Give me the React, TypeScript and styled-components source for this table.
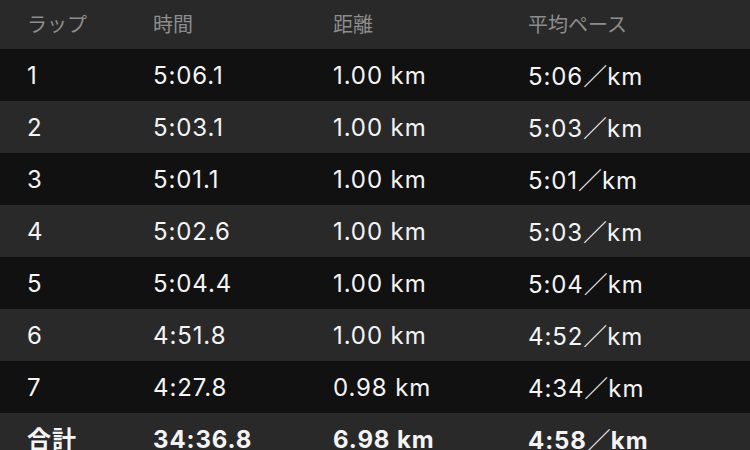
import React from 'react';
import styled, { createGlobalStyle } from 'styled-components';

interface Lap {
	lap: string;
	time: string;
	distance: string;
	pace: string;
}

const laps: Lap[] = [
	{ lap: '1', time: '5:06.1', distance: '1.00 km', pace: '5:06' },
	{ lap: '2', time: '5:03.1', distance: '1.00 km', pace: '5:03' },
	{ lap: '3', time: '5:01.1', distance: '1.00 km', pace: '5:01' },
	{ lap: '4', time: '5:02.6', distance: '1.00 km', pace: '5:03' },
	{ lap: '5', time: '5:04.4', distance: '1.00 km', pace: '5:04' },
	{ lap: '6', time: '4:51.8', distance: '1.00 km', pace: '4:52' },
	{ lap: '7', time: '4:27.8', distance: '0.98 km', pace: '4:34' },
];

const total: Lap = { lap: '合計', time: '34:36.8', distance: '6.98 km', pace: '4:58' };

const GlobalStyle = createGlobalStyle`
	html, body {
		margin: 0;
		padding: 0;
		background: #121212;
		overflow: hidden;
	}
	body {
		font-family: Inter, "Noto Sans CJK JP", sans-serif;
		-webkit-font-smoothing: antialiased;
	}
`;

const Table = styled.div`
	width: 750px;
	height: 450px;
	overflow: hidden;
	display: flex;
	flex-direction: column;
`;

const Row = styled.div<{ $variant: 'header' | 'dark' | 'light' | 'total' }>`
	display: grid;
	grid-template-columns: 126px 180px 195px 1fr;
	align-items: center;
	flex: 0 0 auto;
	height: ${(p) => (p.$variant === 'header' ? '49px' : '52px')};
	padding-left: 27px;
	box-sizing: border-box;
	background: ${(p) => (p.$variant === 'dark' ? '#111111' : '#292929')};
	color: ${(p) => (p.$variant === 'header' ? '#8d8d8d' : '#f4f4f4')};
	font-size: ${(p) => (p.$variant === 'header' ? '20px' : '24px')};
	font-weight: ${(p) => (p.$variant === 'total' ? 700 : 400)};
	letter-spacing: ${(p) => (p.$variant === 'header' ? '0' : '0.9px')};
`;

const Cell = styled.span`
	white-space: nowrap;
	line-height: 1;
	padding-top: 1px;
`;

const Slash = styled.span`
	font-family: "Noto Sans CJK JP", sans-serif;
	font-weight: 300;
	letter-spacing: 0;
`;

const PaceCell: React.FC<{ pace: string }> = ({ pace }) => (
	<Cell>
		{pace}
		<Slash>／</Slash>km
	</Cell>
);

const App: React.FC = () => (
	<>
		<GlobalStyle />
		<Table>
			<Row $variant="header">
				<Cell>ラップ</Cell>
				<Cell>時間</Cell>
				<Cell>距離</Cell>
				<Cell>平均ペース</Cell>
			</Row>
			{laps.map((l, i) => (
				<Row key={l.lap} $variant={i % 2 === 0 ? 'dark' : 'light'}>
					<Cell>{l.lap}</Cell>
					<Cell>{l.time}</Cell>
					<Cell>{l.distance}</Cell>
					<PaceCell pace={l.pace} />
				</Row>
			))}
			<Row $variant="total">
				<Cell>{total.lap}</Cell>
				<Cell>{total.time}</Cell>
				<Cell>{total.distance}</Cell>
				<PaceCell pace={total.pace} />
			</Row>
		</Table>
	</>
);

export default App;
